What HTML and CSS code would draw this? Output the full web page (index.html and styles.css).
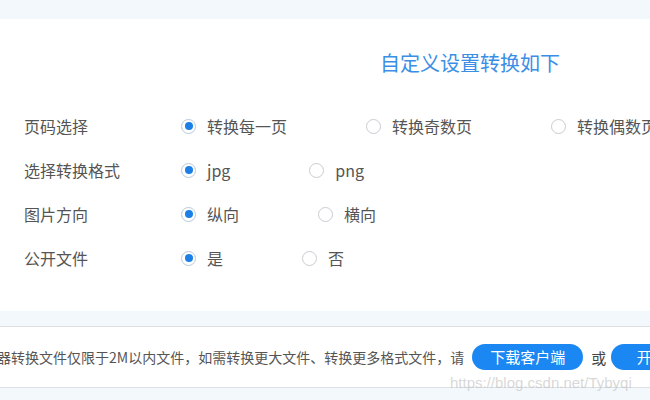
FILE: index.html
```html
<!DOCTYPE html>
<html lang="zh-CN">
<head>
    <meta charset="UTF-8">
    <meta name="viewport" content="width=device-width, initial-scale=1.0">
    <title>自定义设置转换</title>
    <link rel="stylesheet" href="styles.css">
</head>
<body>
    <div class="page">
        <section class="card">
            <h2 class="title">自定义设置转换如下</h2>
            <div class="row">
                <span class="label">页码选择</span>
                <span class="option"><i class="radio checked"></i>转换每一页</span>
                <span class="option"><i class="radio"></i>转换奇数页</span>
                <span class="option"><i class="radio"></i>转换偶数页</span>
            </div>
            <div class="row">
                <span class="label">选择转换格式</span>
                <span class="option"><i class="radio checked"></i>jpg</span>
                <span class="option"><i class="radio"></i>png</span>
            </div>
            <div class="row">
                <span class="label">图片方向</span>
                <span class="option"><i class="radio checked"></i>纵向</span>
                <span class="option"><i class="radio"></i>横向</span>
            </div>
            <div class="row">
                <span class="label">公开文件</span>
                <span class="option"><i class="radio checked"></i>是</span>
                <span class="option"><i class="radio"></i>否</span>
            </div>
        </section>
        <div class="notice">
            <span class="notice-text">器转换文件仅限于2M以内文件，如需转换更大文件、转换更多格式文件，请</span>
            <a class="btn">下载客户端</a>
            <span class="or">或</span>
            <a class="btn">开通会员</a>
        </div>
        <div class="watermark">https://blog.csdn.net/Tybyqi</div>
    </div>
</body>
</html>
```

FILE: styles.css
```css
body {
    margin: 0;
    padding: 0;
    background: #f3f8fc;
    font-family: "Noto Sans CJK SC", "Microsoft YaHei", sans-serif;
    color: #555;
    overflow: hidden;
    height: 400px;
}
.page {
    position: relative;
    padding-top: 19px;
    width: 800px;
}
.card {
    background: #fff;
    padding: 30px 0 31px;
}
.title {
    margin: 0 0 27px 380px;
    font-size: 20px;
    line-height: 28px;
    font-weight: normal;
    color: #3a8ee6;
}
.row {
    display: flex;
    align-items: center;
    height: 44px;
    font-size: 16px;
    white-space: nowrap;
}
.label {
    width: 157px;
    padding-left: 24px;
}
.option {
    display: flex;
    align-items: center;
    margin-right: 79px;
}
.radio {
    position: relative;
    width: 13px;
    height: 13px;
    border: 1px solid #c9ccd1;
    border-radius: 50%;
    margin-right: 11px;
    background: #fff;
}
.radio.checked {
    border-color: #b9c9dc;
}
.radio.checked::after {
    content: "";
    position: absolute;
    left: 2.5px;
    top: 2.5px;
    width: 8px;
    height: 8px;
    border-radius: 50%;
    background: #1c7fe6;
}
.notice {
    margin-top: 15px;
    background: #fff;
    border-top: 1px solid #dcdfe3;
    border-bottom: 1px solid #dcdfe3;
    height: 60px;
    display: flex;
    align-items: center;
    white-space: nowrap;
    font-size: 14px;
    color: #555;
}
.notice-text {
    margin-left: -3px;
}
.btn {
    display: inline-block;
    width: 111px;
    height: 26px;
    line-height: 26px;
    border-radius: 13px;
    background: #1a87f2;
    color: #fff;
    font-size: 15px;
    text-align: center;
    margin-left: 8px;
}
.or {
    margin: 0 5px 0 8px;
    font-size: 15px;
    color: #444;
}
.or + .btn {
    margin-left: 0;
}
.watermark {
    position: absolute;
    left: 450px;
    top: 374px;
    font-family: "Liberation Sans", Arial, sans-serif;
    font-size: 15px;
    color: rgba(190, 190, 190, 0.6);
}
```
